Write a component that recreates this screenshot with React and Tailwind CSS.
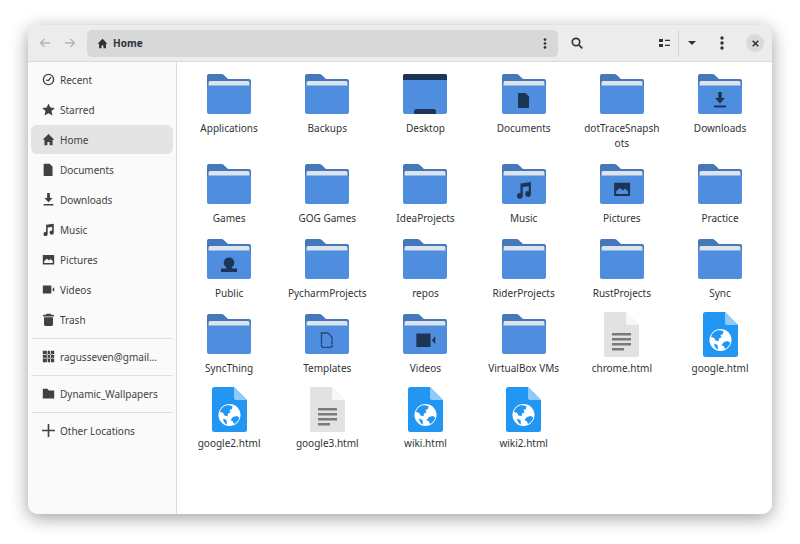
const G = {
  doc: <path d="M3 1h6.5L13 4.5V15a1 1 0 0 1-1 1H3a1 1 0 0 1-1-1V2a1 1 0 0 1 1-1z" />,
  download: <path d="M6.300 0h3.400v6H13l-5 5.500L3 6h3.300zM2 13.500h12V15.500H2z" />,
  music: <path d="M5 2.200 14.500 1v10.800a2.600 2.600 0 1 1-2-2.500V4.800L7 5.500v8a2.600 2.600 0 1 1-2-2.500z" />,
  picture: <path fillRule="evenodd" d="M1 2.500h14v11.500H1zM2.800 12.200h10.400v-2.400L10.600 7.400 8.600 9.200 6 7 2.800 9.800z" />,
  video: <path d="M1 3h10.500v10H1zM12.500 8 15 5v6z" />,
  person: <path d="M8 .5a5.200 5.200 0 0 1 2.800 9.600v1.400H16V15H0v-3.500h5.200v-1.400A5.200 5.200 0 0 1 8 .5z" />,
  template: (
    <path
      fill="none"
      stroke="currentColor"
      strokeWidth="1.300"
      strokeDasharray="2 .5"
      d="M2.500 1h6.500l4 4v9.500a.8.8 0 0 1-.8.8H3.300a.8.8 0 0 1-.8-.8z"
    />
  ),
  clock: (
    <g>
      <circle cx="8" cy="8" r="6.300" fill="none" stroke="currentColor" strokeWidth="1.700" />
      <path d="M4.800 8.600 8 9.200l3-4" fill="none" stroke="currentColor" strokeWidth="1.500" />
    </g>
  ),
  star: <path d="M8 .5l2.300 5 5.500.6-4.100 3.700 1.200 5.500L8 12.600l-4.900 2.700 1.200-5.500L.2 6.100l5.500-.6z" />,
  home: <path d="M8 1.200 .8 8.400H3V15h3.600v-4h2.800v4H13V8.400h2.200z" />,
  trash: <path d="M5.500 1h5l.6 1.300H14.500v2h-13v-2h3.400zM2.500 5.200h11V14a2 2 0 0 1-2 2h-7a2 2 0 0 1-2-2z" />,
  server: <path fillRule="evenodd" d="M1 1h14v14H1zM6 1v14h1V1zM10 1v14h1V1zM1 5.200v.9h14v-.9zM1 9.600v.9h14v-.9z" />,
  folder: <path d="M1 2h5.500l2 2.200H15V14H1z" />,
  plus: <path d="M7 0h2v7h7v2H9v7H7V9H0V7h7z" />,
};

const glyphPlace = {
  video: "translate(12 15.500) scale(1.350)",
  picture: "translate(13 16) scale(1.140)",
  music: "translate(13 17) scale(1.100)",
};

function Glyph({ name, className }) {
  return (
    <svg viewBox="0 0 16 16" fill="currentColor" className={className}>
      {G[name]}
    </svg>
  );
}

function Folder({ glyph, desktop }) {
  if (desktop) {
    return (
      <svg width="44" height="40" viewBox="0 0 44 40">
        <path d="M0 5h44v33a2 2 0 0 1-2 2H2a2 2 0 0 1-2-2z" fill="#4f8ddf" />
        <path d="M1.500 0h41A1.500 1.500 0 0 1 44 1.500V6H0V1.500A1.500 1.500 0 0 1 1.500 0z" fill="#1c3557" />
        <path d="M11 40v-2.500A2.500 2.500 0 0 1 13.500 35h17A2.500 2.500 0 0 1 33 37.500V40z" fill="#1c3557" />
      </svg>
    );
  }
  return (
    <svg width="44" height="40" viewBox="0 0 44 40">
      <path d="M2 0h12.500a3 3 0 0 1 2 .8L21 5h21a2 2 0 0 1 2 2v6H0V2a2 2 0 0 1 2-2z" fill="#4578b9" />
      <path d="M3 7h38a1.500 1.500 0 0 1 1.500 1.500V12h-41V8.500A1.500 1.500 0 0 1 3 7z" fill="#dde4ee" />
      <path d="M0 11.500h44v26.500a2 2 0 0 1-2 2H2a2 2 0 0 1-2-2z" fill="#4f8ddf" />
      {glyph && (
        <g transform={glyphPlace[glyph] || "translate(14 18)"} fill="#1c3557" color="#1c3557">
          {G[glyph]}
        </g>
      )}
    </svg>
  );
}

function TextFile() {
  return (
    <svg width="35" height="45" viewBox="0 0 35 45">
      <path d="M1.500 0H22l13 13v30.500a1.500 1.500 0 0 1-1.500 1.500h-32A1.500 1.500 0 0 1 0 43.500V1.500A1.500 1.500 0 0 1 1.500 0z" fill="#e2e2e2" />
      <path d="M22 0l13 13H24a2 2 0 0 1-2-2z" fill="#f7f7f7" />
      <path d="M8 21h19v2.500H8zM8 26h19v2.500H8zM8 31h19v2.500H8zM8 36h12v2.500H8z" fill="#7a7a7a" />
    </svg>
  );
}

function WebFile() {
  return (
    <svg width="35" height="45" viewBox="0 0 35 45">
      <path d="M2.500 0H22l13 13v29.500a2.500 2.500 0 0 1-2.500 2.500h-30A2.500 2.500 0 0 1 0 42.500v-40A2.500 2.500 0 0 1 2.500 0z" fill="#2196f3" />
      <path d="M22 0l13 13H24a2 2 0 0 1-2-2z" fill="#90caf9" />
      <circle cx="17.500" cy="28" r="11" fill="#fff" />
      <path
        d="M14 18.500c-3 1-5.500 3.500-6 6.500l3 .8 1.500 2.700 3 .7.500-2.700 2.500-1-1-2.500 2.500-1 .5-2.800c-2-.8-4.500-1-6.500-.7zM21 30l3.500-1 2.800 1.500c-.8 3-2.800 5.500-5.300 6.500l-1-2.500-2.500-1.500zM11 31.500l3.500 1.500.5 4.500c-2-.8-3.500-2.800-4-6z"
        fill="#2196f3"
      />
    </svg>
  );
}

const sidebar = [
  ["clock", "Recent"],
  ["star", "Starred"],
  ["home", "Home", true],
  ["doc", "Documents"],
  ["download", "Downloads"],
  ["music", "Music"],
  ["picture", "Pictures"],
  ["video", "Videos"],
  ["trash", "Trash"],
  "sep",
  ["server", "ragusseven@gmail…"],
  "sep",
  ["folder", "Dynamic_Wallpapers"],
  "sep",
  ["plus", "Other Locations"],
];

const files = [
  { n: "Applications" },
  { n: "Backups" },
  { n: "Desktop", desktop: true },
  { n: "Documents", g: "doc" },
  { n: "dotTraceSnapsh\nots" },
  { n: "Downloads", g: "download" },
  { n: "Games" },
  { n: "GOG Games" },
  { n: "IdeaProjects" },
  { n: "Music", g: "music" },
  { n: "Pictures", g: "picture" },
  { n: "Practice" },
  { n: "Public", g: "person" },
  { n: "PycharmProjects" },
  { n: "repos" },
  { n: "RiderProjects" },
  { n: "RustProjects" },
  { n: "Sync" },
  { n: "SyncThing" },
  { n: "Templates", g: "template" },
  { n: "Videos", g: "video" },
  { n: "VirtualBox VMs" },
  { n: "chrome.html", t: "text" },
  { n: "google.html", t: "web" },
  { n: "google2.html", t: "web" },
  { n: "google3.html", t: "text" },
  { n: "wiki.html", t: "web" },
  { n: "wiki2.html", t: "web" },
];

function Dots({ className }) {
  return (
    <svg viewBox="0 0 4 14" fill="currentColor" className={className}>
      <circle cx="2" cy="2" r="1.700" />
      <circle cx="2" cy="7" r="1.700" />
      <circle cx="2" cy="12" r="1.700" />
    </svg>
  );
}

export default function App() {
  return (
    <div className="w-[800px] h-[544px] bg-white pt-[25px] px-[28px] overflow-hidden font-['Noto_Sans',sans-serif] text-[10px] text-[#2e3436]">
      <div className="h-[489px] rounded-[10px] bg-white shadow-[0_4px_18px_rgba(0,0,0,0.38)] flex flex-col overflow-hidden">
        <header className="h-[37px] shrink-0 bg-[#ececec] border-b border-[#d9d9d9] flex items-center pl-[5px] pr-2">
          <div className="w-6 flex justify-center text-[#b5b5b5]">
            <svg width="12" height="12" viewBox="0 0 12 12" fill="none" stroke="currentColor" strokeWidth="1.300">
              <path d="M11 6H1.500M5.500 2 1.500 6l4 4" />
            </svg>
          </div>
          <div className="w-6 ml-px flex justify-center text-[#b5b5b5]">
            <svg width="12" height="12" viewBox="0 0 12 12" fill="none" stroke="currentColor" strokeWidth="1.300">
              <path d="M1 6h9.500M6.500 2l4 4-4 4" />
            </svg>
          </div>
          <div className="ml-[5px] w-[471px] h-[27px] bg-[#d8d8d8] rounded-[5px] flex items-center pl-[10px] pr-[11px]">
            <Glyph name="home" className="w-[11px] h-[11px] text-[#2e3436]" />
            <span className="ml-[5px] font-bold">Home</span>
            <Dots className="ml-auto w-[4px] h-[11px] text-[#2e3436]" />
          </div>
          <div className="w-[38px] flex justify-center text-[#2e3436]">
            <svg width="12" height="12" viewBox="0 0 12 12" fill="none" stroke="currentColor" strokeWidth="1.700">
              <circle cx="5" cy="5" r="3.700" />
              <path d="m7.800 7.800 3.500 3.500" />
            </svg>
          </div>
          <div className="ml-auto flex items-center">
            <div className="w-7 h-[27px] flex items-center justify-center text-[#2e3436]">
              <svg width="11" height="8" viewBox="0 0 11 8" fill="currentColor">
                <path d="M0 0h4v3H0zM0 5h4v3H0zM6 .7h5V2H6zM6 5.700h5V7H6z" />
              </svg>
            </div>
            <div className="w-[26px] h-[27px] border-l border-[#d6d6d6] flex items-center justify-center text-[#2e3436]">
              <svg width="8" height="4" viewBox="0 0 8 4" fill="currentColor">
                <path d="M0 0h8L4 4z" />
              </svg>
            </div>
            <div className="w-9 flex justify-center">
              <Dots className="w-[4px] h-[14px] text-[#2e3436]" />
            </div>
            <div className="ml-[6px] w-[18px] h-[18px] rounded-full bg-[#d9d9d9] flex items-center justify-center text-[#2e3436]">
              <svg width="7" height="7" viewBox="0 0 7 7" fill="none" stroke="currentColor" strokeWidth="1.600">
                <path d="m.7.7 5.600 5.600M6.300.7.700 6.300" />
              </svg>
            </div>
          </div>
        </header>
        <div className="flex-1 flex min-h-0">
          <aside className="w-[149px] shrink-0 bg-[#fafafa] border-r border-[#dcdcdc] pt-[3px] px-[3px]">
            {sidebar.map((it, i) =>
              it === "sep" ? (
                <div key={i} className="h-[7px] flex items-center pb-[1px]">
                  <div className="w-full h-px bg-[#e0e0e0]" />
                </div>
              ) : (
                <div key={i} className="h-[30px] pb-px">
                  <div
                    className={
                      it[2]
                        ? "h-[29px] flex items-center pl-[11px] rounded-[6px] bg-[#e4e4e4] text-[#3d4244]"
                        : "h-[29px] flex items-center pl-[11px] text-[#3d4244]"
                    }
                  >
                    <Glyph name={it[0]} className="w-[13px] h-[13px] shrink-0 text-[#3f4244]" />
                    <span className="ml-[5px] mt-[2px] whitespace-nowrap">{it[1]}</span>
                  </div>
                </div>
              )
            )}
          </aside>
          <main className="flex-1 bg-white pl-[3px] pt-2">
            <div className="grid grid-cols-[repeat(6,98.2px)] items-start">
              {files.map((f) => (
                <div key={f.n} className="flex flex-col items-center pb-[9px]">
                  <div className="h-12 flex items-center justify-center">
                    {f.t === "text" ? <TextFile /> : f.t === "web" ? <WebFile /> : <Folder glyph={f.g} desktop={f.desktop} />}
                  </div>
                  <div className="mt-[3px] leading-[15px] text-center whitespace-pre-line text-[#2e3436]">{f.n}</div>
                </div>
              ))}
            </div>
          </main>
        </div>
      </div>
    </div>
  );
}
